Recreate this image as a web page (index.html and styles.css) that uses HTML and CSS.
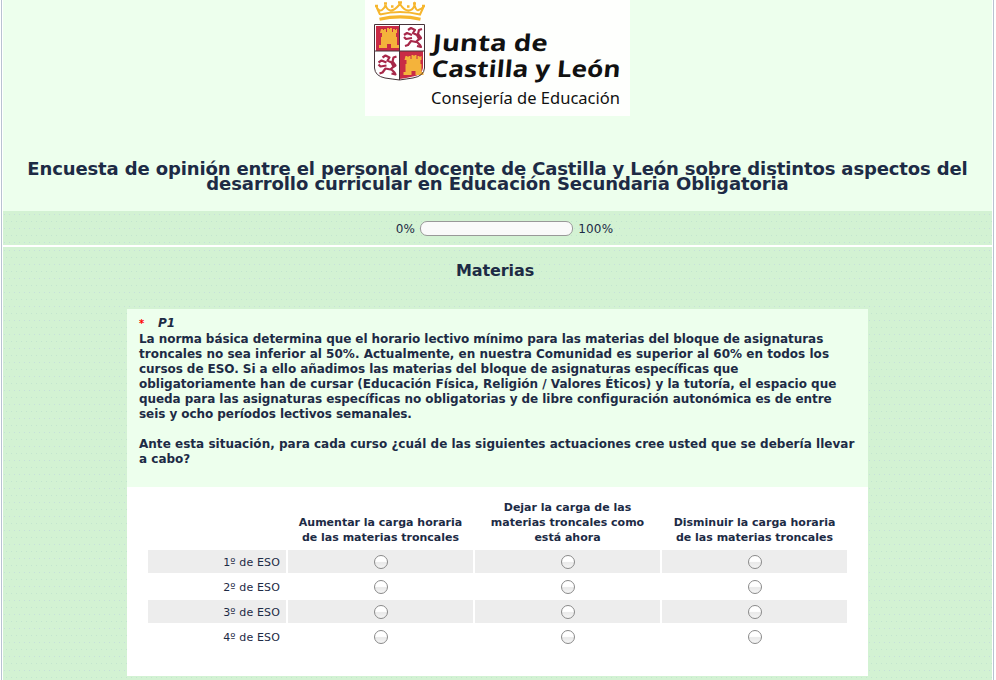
FILE: index.html
```
<!DOCTYPE html>
<html lang="es">
<head>
  <meta charset="UTF-8">
  <title>Encuesta</title>
  <link rel="stylesheet" href="styles.css">
</head>
<body>
  <div class="outerframe">
    <header class="header">
      <svg class="logo" width="265" height="116" viewBox="0 0 265 116">
        <rect width="265" height="116" fill="#fefffd"/>
        <!-- crown -->
        <g fill="none" stroke="#f6b62e">
          <path d="M14.500 19.200Q35 14.600 55.500 19.200" stroke-width="3.200"/>
          <path d="M15 14.500L11.500 7Q14 12 17 10T20.500 5Q22 10 25.500 10.500T35 4Q39 10.500 43.500 10.500T49.500 5Q51 11 53.500 10T58.500 7L55 14.500Q35 9.500 15 14.500" stroke-width="2"/>
          <path d="M10 6h3M19 3.500h3M33 2.500h4M48 3.500h3M57 6h3M26 6.500h2.500M42 6.500h2.500" stroke-width="2.400"/>
        </g>
        <!-- shield -->
        <path d="M9.500 24.500H59.500V68Q59 76 48 78Q41 79 34.500 80Q27 79 20 78Q10 76 9.500 68Z" fill="#fff"/>
        <path d="M11 26H34V51H11Z" fill="#c92b45"/>
        <path d="M34.500 51H58V68Q57 75 48 76.500Q41 78 34.500 79Z" fill="#c92b45"/>
        <g fill="#f4b33b">
          <path id="castle" d="M16 29h2v1h1v-1h2v3h1v-4h2v1h1v-1h2v4h1v-3h2v1h1v-1h1v4h-1v4h1v8h2v3h-8v-4h-4v4h-8v-3h2v-8h1v-4h-2z"/>
          <use href="#castle" x="24.500" y="27"/>
        </g>
        <g fill="none" stroke="#a72849" stroke-width="2.200" stroke-linejoin="round">
          <path id="lion" d="M43 30l3-2 4 2-2 3 4 2 2 4-3 3-5-1-3 4-3 1M47 35l-5-2-3 2M47 38l-6 1-2-2M51 41l4 4 1 2-4-1M53 40l3-2-3-4 1-4 3-1"/>
          <use href="#lion" x="-25.500" y="27.500"/>
        </g>
        <path d="M9.500 24.500H59.500V68Q59 76 48 78Q41 79 34.500 80Q27 79 20 78Q10 76 9.500 68ZM34.500 24.500V80M9.500 51H59.500" fill="none" stroke="#46343a" stroke-width="1"/>
        <g class="logo-name">
          <text transform="translate(67 51) skewX(-5)" textLength="115" lengthAdjust="spacingAndGlyphs">Junta de</text>
          <text transform="translate(66 77) skewX(-5)" textLength="189" lengthAdjust="spacingAndGlyphs">Castilla y León</text>
        </g>
        <text class="logo-dept" x="66" y="104" textLength="189" lengthAdjust="spacingAndGlyphs">Consejería de Educación</text>
      </svg>
      <h1 class="survey-name"><span class="first">Encuesta de opinión entre el personal docente de Castilla y León sobre distintos aspectos del</span><br>desarrollo curricular en Educación Secundaria Obligatoria</h1>
    </header>

    <div class="progress">
      <span>0%</span>
      <div class="progress-bar"></div>
      <span>100%</span>
    </div>

    <main class="group">
      <h2 class="group-name">Materias</h2>
      <div class="question">
        <div class="question-text">
          <div class="code"><span class="asterisk">*</span><em>P1</em></div>
          <p><span class="tight">La norma básica determina que el horario lectivo mínimo para las materias del bloque de asignaturas</span><br>
          <span class="loose">troncales no sea inferior al 50%. Actualmente, en nuestra Comunidad es superior al 60% en todos los</span><br>
          <span class="tight">cursos de ESO. Si a ello añadimos las materias del bloque de asignaturas específicas que</span><br>
          obligatoriamente han de cursar (Educación Física, Religión / Valores Éticos) y la tutoría, el espacio que<br>
          <span class="tight">queda para las asignaturas específicas no obligatorias y de libre configuración autonómica es de entre</span><br>
          <span class="tight">seis y ocho períodos lectivos semanales.</span></p>
          <p class="ask"><span class="loose">Ante esta situación, para cada curso ¿cuál de las siguientes actuaciones cree usted que se debería llevar</span><br>
          a cabo?</p>
        </div>
        <div class="answers">
          <div class="row head">
            <div></div>
            <div>Aumentar la carga horaria<br>de las materias troncales</div>
            <div>Dejar la carga de las<br>materias troncales como<br>está ahora</div>
            <div>Disminuir la carga horaria<br>de las materias troncales</div>
          </div>
          <div class="row odd">
            <div class="label">1º de ESO</div>
            <div><input type="radio" name="c1"></div>
            <div><input type="radio" name="c1"></div>
            <div><input type="radio" name="c1"></div>
          </div>
          <div class="row">
            <div class="label">2º de ESO</div>
            <div><input type="radio" name="c2"></div>
            <div><input type="radio" name="c2"></div>
            <div><input type="radio" name="c2"></div>
          </div>
          <div class="row odd">
            <div class="label">3º de ESO</div>
            <div><input type="radio" name="c3"></div>
            <div><input type="radio" name="c3"></div>
            <div><input type="radio" name="c3"></div>
          </div>
          <div class="row">
            <div class="label">4º de ESO</div>
            <div><input type="radio" name="c4"></div>
            <div><input type="radio" name="c4"></div>
            <div><input type="radio" name="c4"></div>
          </div>
        </div>
      </div>
    </main>
  </div>
</body>
</html>
```
FILE: styles.css
```
* {
  box-sizing: border-box;
}

body {
  margin: 0;
  height: 680px;
  overflow: hidden;
  background: #fff;
  color: #1d2b45;
  font-family: Verdana, "DejaVu Sans", sans-serif;
  font-size: 12px;
}

.outerframe {
  display: flex;
  flex-direction: column;
  width: 993px;
  height: 680px;
  margin-left: 1px;
  border-left: 1px solid #b9c3d2;
  border-right: 1px solid #b9c3d2;
  padding: 0 1px;
}

.header {
  height: 211px;
  background: #edffed;
  text-align: center;
}

.logo {
  display: block;
  margin-left: 362px;
}

.logo-name {
  font: bold 23px "Open Sans", sans-serif;
  fill: #111;
}

.logo-dept {
  font: 16px "Noto Sans", sans-serif;
  fill: #111;
}

.survey-name {
  margin: 45px 0 0;
  font-size: 18px;
  line-height: 15px;
  letter-spacing: -0.09px;
  white-space: nowrap;
}

.survey-name .first {
  letter-spacing: -0.13px;
}

.progress,
.group {
  background-color: #d3f2d3;
  background-image:
    radial-gradient(circle at 1.5px 3.5px, #c6dfda 0.7px, transparent 0.8px),
    radial-gradient(circle at 3.5px 10.5px, #c3e5cf 0.7px, transparent 0.8px);
  background-size: 5px 14px;
}

.progress {
  display: flex;
  justify-content: center;
  align-items: center;
  gap: 5px;
  height: 34px;
  padding: 1px 0 0 14px;
  letter-spacing: 0.2px;
}

.progress-bar {
  width: 153px;
  height: 15px;
  border: 1px solid #999;
  border-radius: 7px;
  background: #fafafa;
}

.group {
  flex: 1;
  margin-top: 2px;
}

.group-name {
  margin: 0;
  padding: 13px 5px 28px 0;
  font-size: 16px;
  line-height: 21px;
  letter-spacing: -0.1px;
  text-align: center;
}

.question {
  width: 741px;
  height: 367px;
  margin-left: 124px;
  background: #fff;
}

.question-text {
  height: 178px;
  padding: 7px 11px 6px 12px;
  background: #edffed;
  font-weight: bold;
  line-height: 15px;
  white-space: nowrap;
}

.question-text p {
  margin: 1px 0 0;
}

.question-text .ask {
  margin-top: 15px;
}

.tight {
  letter-spacing: -0.06px;
}

.loose {
  letter-spacing: 0.02px;
}

.code {
  display: flex;
  gap: 12px;
}

.asterisk {
  width: 7px;
  color: #f00;
  font-size: 10px;
}

.answers {
  display: flex;
  flex-direction: column;
  gap: 2px;
  padding: 12px 21px;
  font-size: 11px;
}

.row {
  display: grid;
  grid-template-columns: 138px 185px 185px 185px;
  gap: 2px;
  height: 23px;
}

.row > div {
  display: flex;
  justify-content: center;
  align-items: center;
}

.row.head {
  height: 49px;
  font-weight: bold;
  line-height: 15px;
  text-align: center;
  white-space: nowrap;
}

.row.head > div {
  align-items: flex-end;
  padding-bottom: 3px;
}

.row.odd > div {
  background: #ededed;
}

.row > .label {
  justify-content: flex-end;
  padding: 1px 6px 0 0;
  letter-spacing: 0.15px;
}

.row input {
  appearance: none;
  width: 14px;
  height: 14px;
  margin: 1px 0 0;
  border: 1px solid #8a8a8a;
  border-radius: 50%;
  background: linear-gradient(#fff 45%, #e9e9e9 55%, #f5f5f5);
}
```
